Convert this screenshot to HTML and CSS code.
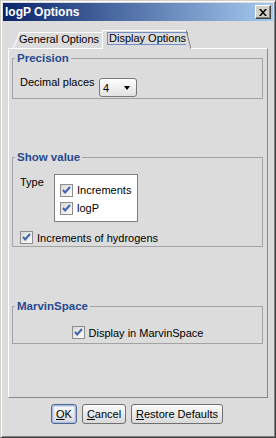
FILE: index.html
```html
<!DOCTYPE html>
<html>
<head>
    <title>logP Options</title>
    <meta name="viewport" content="width=device-width, initial-scale=1">
    <link rel="stylesheet" href="styles.css">
</head>
<body>
    <div class="window">
        <div class="titlebar">
            <span class="title">logP Options</span>
            <span class="close-btn">
                <svg width="8" height="7" viewBox="0 0 8 7"><path d="M0 0h2l2 2.5L6 0h2L5 3.5 8 7H6L4 4.5 2 7H0l3-3.5z" fill="#000"/></svg>
            </span>
        </div>

        <div class="client">
            <div class="tabs">
                <div class="tab">General Options</div>
                <div class="tab selected"><span class="focus">Display Options</span></div>
            </div>

            <div class="tab-panel">
                <fieldset class="group precision">
                    <legend>Precision</legend>
                    <div class="row">
                        <span class="label">Decimal places</span>
                        <div class="combo"><span>4</span><span class="arrow"></span></div>
                    </div>
                </fieldset>

                <fieldset class="group show-value">
                    <legend>Show value</legend>
                    <div class="type-row">
                        <span class="label type-label">Type</span>
                        <div class="type-box">
                            <div class="check"><span class="box"><svg width="11" height="11" viewBox="0 0 11 11"><path d="M2 5l2.2 2.5L9 2" fill="none" stroke="#4363ad" stroke-width="2"/></svg></span>Increments</div>
                            <div class="check"><span class="box"><svg width="11" height="11" viewBox="0 0 11 11"><path d="M2 5l2.2 2.5L9 2" fill="none" stroke="#4363ad" stroke-width="2"/></svg></span>logP</div>
                        </div>
                    </div>
                    <div class="check hydrogens"><span class="box"><svg width="11" height="11" viewBox="0 0 11 11"><path d="M2 5l2.2 2.5L9 2" fill="none" stroke="#4363ad" stroke-width="2"/></svg></span>Increments of hydrogens</div>
                </fieldset>

                <fieldset class="group marvin">
                    <legend>MarvinSpace</legend>
                    <div class="check centered"><span class="box"><svg width="11" height="11" viewBox="0 0 11 11"><path d="M2 5l2.2 2.5L9 2" fill="none" stroke="#4363ad" stroke-width="2"/></svg></span>Display in MarvinSpace</div>
                </fieldset>
            </div>

            <div class="buttons">
                <button type="button" class="btn default btn-ok"><u>O</u>K</button>
                <button type="button" class="btn btn-cancel"><u>C</u>ancel</button>
                <button type="button" class="btn btn-restore"><u>R</u>estore Defaults</button>
            </div>
        </div>
    </div>
</body>
</html>
```

FILE: styles.css
```css
body {
    margin: 0;
    background: #dcdcdc;
    font-family: "Liberation Sans", Arial, sans-serif;
    font-size: 11px;
    color: #000;
}
.window {
    width: 276px;
    height: 438px;
    box-sizing: border-box;
    border: 1px solid;
    border-color: #d4d0c8 #404040 #404040 #d4d0c8;
    box-shadow: inset 1px 1px 0 #fff, inset -1px -1px 0 #808080;
    padding: 2px;
    background: #dcdcdc;
}
.titlebar {
    display: flex;
    align-items: center;
    height: 18px;
    background: linear-gradient(to right, #0a246a 0%, #a6caf0 100%);
}
.title {
    padding-left: 2px;
    color: #fff;
    font-weight: bold;
    font-size: 12px;
    line-height: 14px;
}
.close-btn {
    display: flex;
    align-items: center;
    justify-content: center;
    margin-left: auto;
    margin-right: 2px;
    width: 16px;
    height: 14px;
    box-sizing: border-box;
    background: #d4d0c8;
    border: 1px solid;
    border-color: #fff #404040 #404040 #fff;
    box-shadow: inset -1px -1px 0 #808080;
}
.client {
    padding: 0 5px;
}
.tabs {
    display: flex;
    align-items: flex-end;
    margin-top: 9px;
    margin-bottom: -1px;
    padding-left: 5px;
}
.tab {
    position: relative;
    width: 89px;
    height: 17px;
    box-sizing: border-box;
    padding: 1px 0 0 6px;
    line-height: 13px;
    white-space: nowrap;
    background: linear-gradient(#fff, #fff) 7px 0 / calc(100% - 7px) 1px no-repeat;
}
.tab::before {
    content: "";
    position: absolute;
    left: 0;
    top: 0;
    width: 7px;
    height: 17px;
    background: linear-gradient(to top left, transparent calc(50% - 1px), #fff 50%, transparent calc(50% + 1px));
}
.tab.selected {
    z-index: 1;
    width: 84px;
    height: 19px;
    padding: 1px 0 0 4px;
    background: #dcdcdc;
    border-top: 1px solid #fff;
    border-left: 1px solid #fff;
}
.tab.selected::before {
    display: none;
}
.tab.selected::after {
    content: "";
    position: absolute;
    left: 100%;
    top: -1px;
    width: 5px;
    height: 19px;
    background: linear-gradient(to top right, #dcdcdc calc(50% - 1px), #808080 50%, transparent calc(50% + 1px));
}
.focus {
    display: inline-block;
    border: 1px solid #6f8cc6;
    line-height: 11px;
    padding: 0 1px;
}
.tab-panel {
    height: 350px;
    box-sizing: border-box;
    border: 1px solid;
    border-color: #fff #8a8a8a #8a8a8a #fff;
    padding: 3px 4px 0 3px;
}
.group {
    margin: 0;
    min-width: 0;
    border: 1px solid #a3a3a3;
    padding: 0 7px;
}
.group legend {
    margin-left: -5px;
    padding: 0 2px;
    color: #284a90;
    font-weight: bold;
    font-size: 11.5px;
    line-height: 13px;
}
.label {
    line-height: 13px;
}
.precision {
    padding-top: 11px;
    padding-bottom: 1px;
}
.row {
    display: flex;
    align-items: flex-start;
}
.row .label {
    width: 79px;
    flex: none;
}
.combo {
    display: flex;
    align-items: center;
    width: 38px;
    height: 19px;
    margin-top: 2px;
    box-sizing: border-box;
    padding-left: 3px;
    border: 1px solid #7a7a7a;
    border-radius: 3px;
    background: linear-gradient(#fff, #e2e2e2);
}
.combo .arrow {
    margin-left: auto;
    margin-right: 6px;
    border-left: 3.5px solid transparent;
    border-right: 3.5px solid transparent;
    border-top: 4px solid #000;
}
.show-value {
    margin-top: 52px;
    padding-top: 10px;
}
.type-row {
    display: flex;
    align-items: flex-start;
}
.type-label {
    width: 34px;
    margin-top: 2px;
}
.type-box {
    width: 84px;
    box-sizing: border-box;
    padding: 6px 0 4px 5px;
    border: 1px solid #808080;
    background: #fff;
}
.check {
    display: flex;
    align-items: center;
    gap: 4px;
    height: 18px;
    white-space: nowrap;
}
.box {
    display: flex;
    align-items: center;
    justify-content: center;
    width: 13px;
    height: 13px;
    box-sizing: border-box;
    border: 1px solid #8d8d8d;
    background: linear-gradient(135deg, #d8d8d8, #fbfbfb);
}
.hydrogens {
    margin-top: 7px;
    height: 17px;
}
.marvin {
    margin-top: 53px;
    padding-top: 11px;
    padding-bottom: 2px;
}
.centered {
    justify-content: center;
    height: 17px;
}
.buttons {
    display: flex;
    justify-content: center;
    gap: 5px;
    margin-top: 6px;
    padding-right: 2px;
}
.btn {
    height: 20px;
    padding: 0;
    font-family: inherit;
    font-size: 11px;
    color: #000;
    border: 1px solid #707070;
    border-radius: 3px;
    background: linear-gradient(#fbfbfb, #d9d9d9);
}
.btn.default {
    border-color: #55658a;
    box-shadow: inset 0 0 0 1px #a9bde6, inset 0 0 0 2px #c8d6f0;
}
.btn-ok {
    width: 26px;
}
.btn-cancel {
    width: 44px;
}
.btn-restore {
    width: 92px;
}
```
